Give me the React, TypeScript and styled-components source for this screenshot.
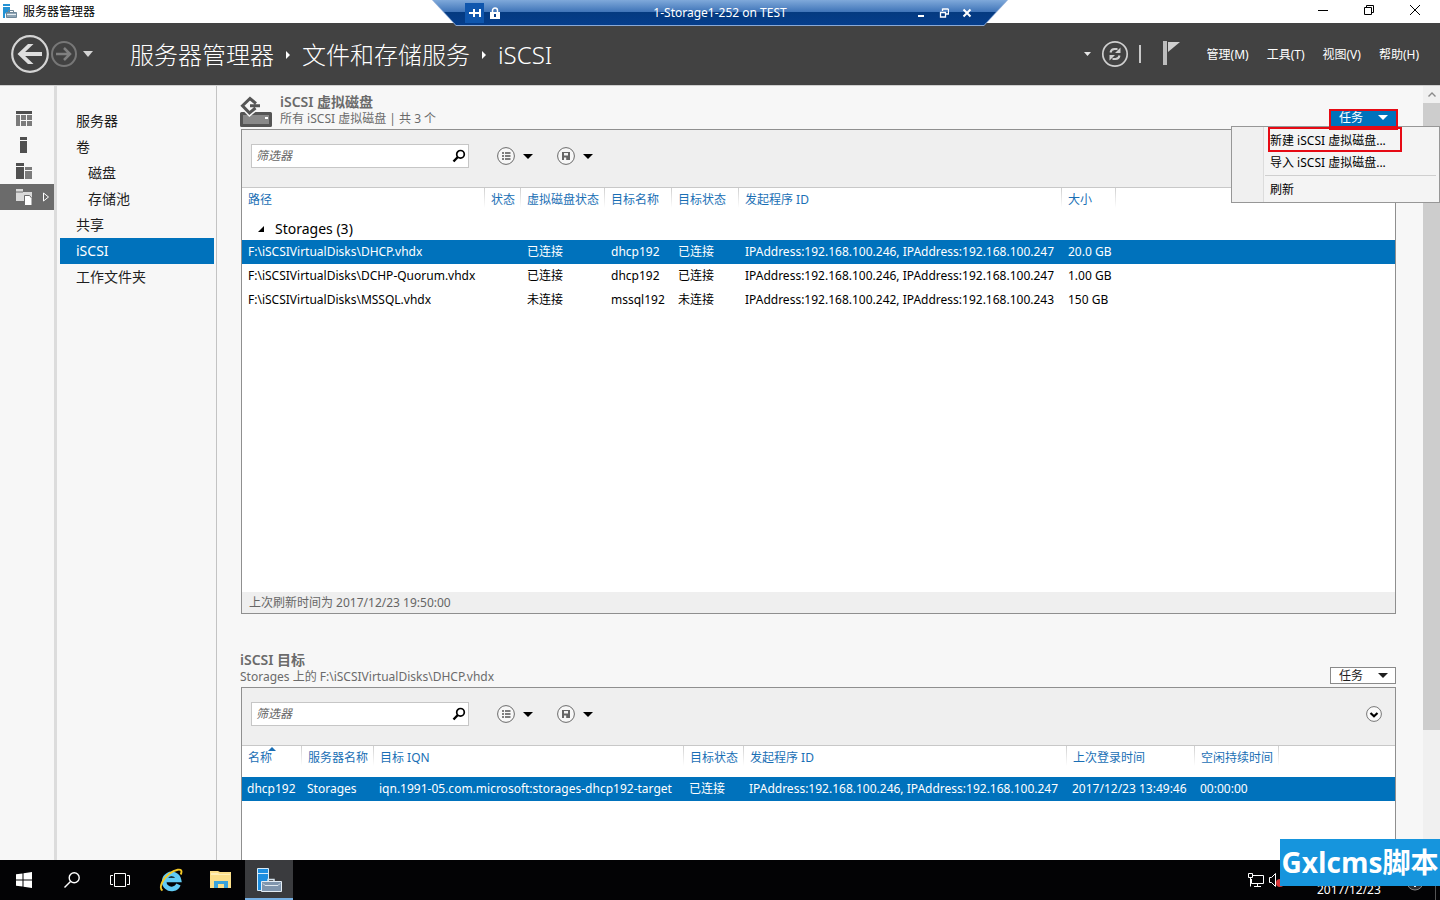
import React from "react";
import styled, { createGlobalStyle, css } from "styled-components";

const blue = "#0072bc";
const link = "#1a6fb5";

const Global = createGlobalStyle`
  * { box-sizing: border-box; }
  body {
    margin: 0;
    overflow: hidden;
    color: #1e1e1e;
    background: #f7f7f7;
    font: 12px/16px "Noto Sans", "Noto Sans CJK SC", sans-serif;
  }
  button, input { font: inherit; color: inherit; }
  button { padding: 0; border: 0; background: none; cursor: pointer; }
  svg { display: block; flex: none; }
  h1, h2, p, ul { margin: 0; padding: 0; font-weight: 400; list-style: none; }
`;

const Screen = styled.div`
  position: relative;
  display: flex;
  flex-direction: column;
  height: 100vh;
`;

/* ---------- window title bar ---------- */
const TitleBar = styled.div`
  display: flex;
  align-items: center;
  flex: none;
  height: 23px;
  padding: 0 19px 0 2px;
  background: #fff;
  color: #000;
`;
const WindowTitle = styled.span`
  flex: 1;
  margin-left: 5px;
`;
const WindowButtons = styled.div`
  display: flex;
  gap: 34px;
  margin-bottom: 3px;
`;

const RemoteBar = styled.div`
  position: absolute;
  top: 0;
  left: 50%;
  z-index: 5;
  width: 576px;
  height: 26px;
  margin-left: -288px;
  clip-path: polygon(0 0, 100% 0, calc(100% - 24px) 100%, 24px 100%);
  background: #8aa9d6;
`;
const RemoteInner = styled.div`
  display: flex;
  align-items: center;
  height: 25px;
  padding: 0 36px 0 33px;
  clip-path: polygon(1px 0, calc(100% - 1px) 0, calc(100% - 24px) 100%, 24px 100%);
  background: linear-gradient(#7fa9da 0, #3f74b8 12px, #043a80 12px, #053d8b 25px);
  color: #fff;
`;
const RemoteName = styled.span`
  flex: 1;
  padding-left: 24px;
  text-align: center;
`;
const PinButton = styled.button`
  display: grid;
  place-items: center;
  width: 19px;
  height: 20px;
  margin-right: 6px;
  background: #0f56ad;
`;
const RemoteButtons = styled.div`
  display: flex;
  gap: 13px;
`;

/* ---------- header with the breadcrumb ---------- */
const Header = styled.header`
  display: flex;
  align-items: center;
  flex: none;
  height: 63px;
  padding: 0 21px 0 10px;
  border-bottom: 1px solid #cfcfcf;
  background: #424242;
  color: #fff;
`;
const HistoryButton = styled.button`
  width: 20px;
  padding-left: 5px;
`;
const Crumbs = styled.nav`
  display: flex;
  align-items: center;
  gap: 11px;
  margin: 1px 0 0 32px;
  font-size: 24px;
  font-weight: 300;
  line-height: 36px;
`;
const Crumb = styled.a`
  color: #fff;
  text-decoration: none;
`;
const HeaderTools = styled.div`
  display: flex;
  align-items: center;
  gap: 10px;
  margin-left: auto;
`;
const HeaderMenu = styled.div`
  display: flex;
  gap: 18px;
  margin: 2px 0 0 16px;
`;
const Bar = styled.span`
  width: 2px;
  height: 18px;
  margin-right: 12px;
  background: #c8c8c8;
`;

/* ---------- body ---------- */
const Body = styled.div`
  display: flex;
  flex: 1;
  min-height: 0;
`;
const Rail = styled.nav`
  width: 57px;
  flex: none;
  padding-top: 20px;
  border-right: 3px solid #dcdcdc;
`;
const RailButton = styled.button<{ $on?: boolean }>`
  display: flex;
  align-items: center;
  gap: 10px;
  width: 100%;
  height: 26px;
  padding-left: 16px;
  background: ${(p) => (p.$on ? "#6b6b6b" : "none")};
`;
const SideNav = styled.nav`
  width: 160px;
  flex: none;
  padding: 22px 2px 0 3px;
  border-right: 1px solid #c3c3c3;
`;
const SideLink = styled.a<{ $on?: boolean; $sub?: boolean }>`
  display: block;
  padding-left: ${(p) => (p.$sub ? 28 : 16)}px;
  font-size: 14px;
  line-height: 26px;
  text-decoration: none;
  color: ${(p) => (p.$on ? "#fff" : "#1e1e1e")};
  background: ${(p) => (p.$on ? blue : "none")};
`;
const Content = styled.main`
  display: flex;
  flex-direction: column;
  flex: 1;
  min-width: 0;
  padding: 8px 27px 0 24px;
`;
const Scrollbar = styled.div`
  width: 17px;
  flex: none;
  background: #f0f0f0;
`;
const ScrollArrow = styled.button`
  display: grid;
  place-items: center;
  width: 100%;
  height: 17px;
`;
const ScrollThumb = styled.div`
  height: 81%;
  background: #cdcdcd;
`;

/* ---------- panels ---------- */
const Section = styled.section<{ $fill?: boolean }>`
  display: flex;
  flex-direction: column;
  flex: ${(p) => (p.$fill ? "1 0 auto" : "none")};
  margin-bottom: ${(p) => (p.$fill ? 0 : 38)}px;
`;
const PanelHead = styled.div`
  position: relative;
  display: flex;
  height: 35px;
  color: #6b6b6b;
`;
const HeadText = styled.div`
  flex: 1;
  margin-left: -1px;
`;
const HeadIcon = styled.span`
  margin: 2px 9px 0 -1px;
`;
const PanelTitle = styled.h2`
  margin-bottom: 2px;
  font-size: 14px;
  font-weight: 600;
  line-height: 15px;
`;
const TaskWrap = styled.div`
  position: relative;
  align-self: flex-end;
  margin-bottom: 3px;
`;
const TaskButton = styled.button<{ $on?: boolean }>`
  display: flex;
  align-items: center;
  justify-content: space-between;
  width: 66px;
  height: 17px;
  padding: 0 7px 0 8px;
  border: 1px solid ${(p) => (p.$on ? blue : "#8a8a8a")};
  background: ${(p) => (p.$on ? blue : "#fff")};
  color: ${(p) => (p.$on ? "#fff" : "#1e1e1e")};
`;
const mark = css`
  position: absolute;
  border: 2px solid #e60a14;
  pointer-events: none;
`;
const ButtonMark = styled.span`
  ${mark}
  z-index: 3;
  inset: 0 -2px -4px -1px;
  border-bottom-width: 4px;
`;
const ItemMark = styled.span`
  ${mark}
  inset: 0 37px auto 36px;
  height: 25px;
`;
const Menu = styled.div`
  position: absolute;
  top: 17px;
  right: -44px;
  z-index: 2;
  width: 209px;
  padding: 3px 3px 1px 0;
  border: 1px solid #979797;
  background: linear-gradient(90deg, #f0f0f0 31px, #dcdcdc 31px, #dcdcdc 32px, #f4f4f4 32px);
`;
const MenuItem = styled.button`
  display: block;
  width: 100%;
  padding-left: 38px;
  line-height: 22px;
  text-align: left;
  color: #000;
`;
const MenuRule = styled.div`
  height: 1px;
  margin: 1px 0 3px 33px;
  background: #cfcfcf;
`;
const Panel = styled.div<{ $fill?: boolean }>`
  display: flex;
  flex-direction: column;
  flex: 1;
  border: 1px solid #8f8f8f;
  border-bottom-width: ${(p) => (p.$fill ? 0 : 1)}px;
  background: #fff;
`;
const Toolbar = styled.div`
  display: flex;
  align-items: center;
  height: 58px;
  padding: 0 13px 5px 9px;
  border-bottom: 1px solid #c8c8c8;
  background: #efefef;
`;
const SearchBox = styled.label`
  display: flex;
  align-items: center;
  width: 218px;
  height: 24px;
  margin-right: 28px;
  padding: 0 2px 0 4px;
  border: 1px solid #c6c6c6;
  background: #fff;
`;
const SearchInput = styled.input`
  flex: 1;
  min-width: 0;
  padding: 0;
  border: 0;
  outline: 0;
  background: none;
  &::placeholder { font-style: italic; color: #666; opacity: 1; }
`;
const DropTool = styled.button`
  display: flex;
  align-items: center;
  gap: 8px;
  width: 60px;
`;
const Expander = styled.button`
  margin-left: auto;
`;
const TableArea = styled.div<{ $tall?: boolean }>`
  flex: 1;
  min-height: ${(p) => (p.$tall ? 404 : 0)}px;
`;
const Table = styled.table<{ $gap?: boolean }>`
  width: 100%;
  border-spacing: 0;
  table-layout: fixed;
  white-space: nowrap;
  color: #000;
  th, td { padding: 0 0 0 6px; text-align: left; font-weight: 400; }
  td { padding-left: ${(p) => (p.$gap ? 5 : 6)}px; }
  th {
    position: relative;
    height: ${(p) => (p.$gap ? 31 : 30)}px;
    padding-bottom: 7px;
    color: ${link};
    background: linear-gradient(#cfcfcf, #fff) no-repeat right top / 1px 20px;
  }
  th:last-child { background: none; }
`;
const SortMark = styled.span`
  position: absolute;
  top: 1px;
  left: 26px;
`;
const Row = styled.tr<{ $on?: boolean }>`
  height: 24px;
  color: ${(p) => (p.$on ? "#fff" : "#000")};
  background: ${(p) => (p.$on ? blue : "none")};
`;
const GroupButton = styled.button`
  display: flex;
  align-items: center;
  gap: 10px;
  padding-left: 9px;
  font-size: 14px;
  line-height: 22px;
`;
const Status = styled.p`
  height: 21px;
  padding-left: 7px;
  background: #efefef;
  color: #666;
  line-height: 21px;
`;

/* ---------- taskbar ---------- */
const Taskbar = styled.footer`
  display: flex;
  flex: none;
  z-index: 4;
  height: 40px;
  background: #030305;
  color: #fff;
`;
const TaskItem = styled.button<{ $on?: boolean; $wide?: boolean }>`
  display: grid;
  place-items: center;
  width: ${(p) => (p.$wide ? 53 : 48)}px;
  background: ${(p) => (p.$on ? "#3a3b3e" : "none")};
  box-shadow: ${(p) => (p.$on ? "inset 0 -2px #76b0e4" : "none")};
`;
const Tray = styled.div`
  display: flex;
  align-items: center;
  gap: 3px;
  margin-left: auto;
  padding-right: 4px;
`;
const Clock = styled.time`
  align-self: flex-end;
  width: 68px;
  margin: 0 16px 0 28px;
  line-height: 20px;
`;
const TrayEnd = styled.span`
  height: 40px;
  margin-left: 6px;
  border-left: 1px solid #555;
`;
const Watermark = styled.div`
  position: absolute;
  right: 0;
  bottom: 14px;
  z-index: 6;
  width: 160px;
  height: 47px;
  background: #1695dd;
  color: #fff;
  font: 700 28px/47px "Open Sans", "Noto Sans CJK SC", sans-serif;
  text-align: center;
  white-space: nowrap;
`;

/* ---------- drawings ---------- */
const Caret = ({ w = 10, h = 5, fill = "#000" }: { w?: number; h?: number; fill?: string }) => (
  <svg width={w} height={h} viewBox="0 0 10 5" preserveAspectRatio="none"><path d="M0 0h10L5 5z" fill={fill} /></svg>
);
const CrumbArrow = () => (
  <svg width="6" height="8" viewBox="0 0 6 8"><path d="M1 0l4 4-4 4z" fill="#fff" /></svg>
);
const ServerLogo = () => (
  <svg width="26" height="26" viewBox="0 0 26 26" fill="none">
    <path d="M1.500 1.500h11v22h-11z" fill="#1d8ee0" stroke="#d8ecfa" />
    <path d="M1 6.500h11" stroke="#d8ecfa" />
    <path d="M12 14v-1.500h6V14" stroke="#d5e2ec" strokeWidth="1.500" />
    <path d="M5.500 14.500h20v10h-20z" fill="#7f95ad" stroke="#e4edf5" />
    <path d="M7 16.500l2 2h13l2-2" stroke="#dfe8ef" />
  </svg>
);
const SmallLogo = () => (
  <svg width="16" height="16" viewBox="0 0 16 16" fill="none">
    <path d="M1 0h7v2H1zM1 3h7v5H5l-2 2v4H1z" fill="#2492d4" />
    <path d="M6.500 8V6.500h5V8" stroke="#6f8799" />
    <path d="M4.500 8.500h10v5h-10z" fill="#8fa5b5" stroke="#6f8799" />
    <path d="M5 10.500h9" stroke="#e6edf2" />
  </svg>
);
const Back = () => (
  <svg width="40" height="40" viewBox="0 0 40 40" fill="none">
    <circle cx="20" cy="20" r="17.800" stroke="#d4d4d4" strokeWidth="2.200" />
    <path d="M32 20H11" stroke="#dedede" strokeWidth="4" />
    <path d="M7.500 20L18 10h5.500L13 20l10.500 10H18z" fill="#dedede" />
  </svg>
);
const Forward = () => (
  <svg width="28" height="28" viewBox="0 0 28 28" fill="none">
    <circle cx="14" cy="14" r="12" stroke="#777" strokeWidth="2" />
    <path d="M6 14h14M14 8l6 6-6 6" stroke="#808080" strokeWidth="2.500" />
  </svg>
);
const Refresh = () => (
  <svg width="28" height="28" viewBox="0 0 28 28" fill="none" stroke="#cfcfcf">
    <circle cx="14" cy="14" r="12.200" strokeWidth="1.700" />
    <path d="M9.500 12.500c.5-2.500 2-3.500 4-3.500h3M18.500 15.500c-.5 2.500-2 3.500-4 3.500h-3" strokeWidth="2" />
    <path d="M19.500 7.500v5.500H14zM8.500 20.500V15H14z" fill="#cfcfcf" stroke="none" />
  </svg>
);
const Flag = () => (
  <svg width="18" height="26" viewBox="0 0 18 26"><path d="M0 0h4v24H0z" fill="#bdbdbd" /><path d="M5 1h12L5 11z" fill="#d0d0d0" /></svg>
);
const Magnifier = () => (
  <svg width="14" height="14" viewBox="0 0 14 14" fill="none" stroke="#000">
    <circle cx="8.500" cy="5.300" r="3.800" strokeWidth="1.700" /><path d="M5.800 8L1.500 12.500" strokeWidth="2.400" />
  </svg>
);
const ListIcon = () => (
  <svg width="18" height="18" viewBox="0 0 18 18" fill="none">
    <circle cx="9" cy="9" r="8.400" stroke="#6a6a6a" fill="#f7f7f7" />
    <path d="M5 6h2M5 9h2M5 12h2M8 6h5.500M8 9h5.500M8 12h5.500" stroke="#555" strokeWidth="1.700" />
  </svg>
);
const SaveIcon = () => (
  <svg width="18" height="18" viewBox="0 0 18 18" fill="none">
    <circle cx="9" cy="9" r="8.400" stroke="#6a6a6a" fill="#f7f7f7" />
    <path d="M5 5h8v8H5z" fill="#666" /><path d="M7 6h4v2.500H7zM7 10.500h2.200V13H7z" fill="#f4f4f4" />
  </svg>
);
const Chevron = () => (
  <svg width="16" height="16" viewBox="0 0 16 16" fill="none">
    <circle cx="8" cy="8" r="7.400" stroke="#777" fill="#fafafa" /><path d="M4.500 7L8 10.300 11.500 7" stroke="#000" strokeWidth="2.200" />
  </svg>
);
const DiskIcon = () => (
  <svg width="32" height="32" viewBox="0 0 32 32" fill="none">
    <path d="M1.500 17.500h29v12h-29z" fill="#898989" stroke="#555" strokeWidth="3" strokeLinejoin="round" />
    <path d="M16 7.500L10 2.500 2.500 9.800 9.500 17l6-5" stroke="#f7f7f7" strokeWidth="6" />
    <path d="M16 7.500L10 2.500 2.500 9.800 9.500 17l6-5M10 9.800h10" stroke="#555" strokeWidth="3" />
    <path d="M25 21h3v2h-3z" fill="#fff" />
  </svg>
);

const caption = { fill: "none", stroke: "#000" };
const railIcons = [
  <svg key="a" width="16" height="16" viewBox="0 0 16 16"><path d="M0 0h16v3H0z" fill="#4e4e4e" /><path d="M0 4h4v11H0zM5 4h5v5H5zM11 4h5v5h-5zM5 10h5v5H5zM11 10h5v5h-5z" fill="#7b7b7b" /></svg>,
  <svg key="b" width="16" height="16" viewBox="0 0 16 16"><path d="M4 0h7v3H4zM4 4h7v12H4z" fill="#505050" /></svg>,
  <svg key="c" width="16" height="16" viewBox="0 0 16 16"><path d="M0 0h8v3H0zM0 4h8v12H0z" fill="#505050" /><path d="M9 4h7v3H9zM9 8h7v8H9z" fill="#7b7b7b" /></svg>,
];

const NavItems = [
  { text: "服务器" },
  { text: "卷" },
  { text: "磁盘", sub: true },
  { text: "存储池", sub: true },
  { text: "共享" },
  { text: "iSCSI", on: true },
  { text: "工作文件夹" },
];

const diskCols = [243, 36, 84, 67, 67, 323, 54];
const diskHeads = ["路径", "状态", "虚拟磁盘状态", "目标名称", "目标状态", "发起程序 ID", "大小"];
const disks = [
  ["F:\\iSCSIVirtualDisks\\DHCP.vhdx", "", "已连接", "dhcp192", "已连接", "IPAddress:192.168.100.246, IPAddress:192.168.100.247", "20.0 GB"],
  ["F:\\iSCSIVirtualDisks\\DCHP-Quorum.vhdx", "", "已连接", "dhcp192", "已连接", "IPAddress:192.168.100.246, IPAddress:192.168.100.247", "1.00 GB"],
  ["F:\\iSCSIVirtualDisks\\MSSQL.vhdx", "", "未连接", "mssql192", "未连接", "IPAddress:192.168.100.242, IPAddress:192.168.100.243", "150 GB"],
];
const targetCols = [60, 72, 310, 60, 323, 128, 84];
const targetHeads = ["名称", "服务器名称", "目标 IQN", "目标状态", "发起程序 ID", "上次登录时间", "空闲持续时间"];
const targets = [
  ["dhcp192", "Storages", "iqn.1991-05.com.microsoft:storages-dhcp192-target", "已连接", "IPAddress:192.168.100.246, IPAddress:192.168.100.247", "2017/12/23 13:49:46", "00:00:00"],
];

function FilterBar() {
  return (
    <Toolbar>
      <SearchBox>
        <SearchInput type="text" placeholder="筛选器" aria-label="筛选器" />
        <Magnifier />
      </SearchBox>
      <DropTool aria-label="列表"><ListIcon /><Caret /></DropTool>
      <DropTool aria-label="保存"><SaveIcon /><Caret /></DropTool>
      <Expander aria-label="展开"><Chevron /></Expander>
    </Toolbar>
  );
}

type GridProps = { cols: number[]; heads: string[]; rows: string[][]; group?: string; sorted?: boolean };

function DataGrid({ cols, heads, rows, group, sorted }: GridProps) {
  return (
    <Table $gap={sorted}>
      <colgroup>
        {cols.map((w, i) => <col key={i} width={w} />)}
        <col />
      </colgroup>
      <thead>
        <tr>
          {heads.map((h, i) => (
            <th key={h} scope="col">
              {h}
              {sorted && i === 0 && <SortMark><svg width="8" height="4" viewBox="0 0 8 4"><path d="M0 4l4-4 4 4z" fill={link} /></svg></SortMark>}
            </th>
          ))}
          <th />
        </tr>
      </thead>
      <tbody>
        {group && (
          <tr>
            <td colSpan={cols.length + 1}>
              <GroupButton>
                <svg width="8" height="8" viewBox="0 0 8 8"><path d="M7 1v6H1z" fill="#000" /></svg>
                {group}
              </GroupButton>
            </td>
          </tr>
        )}
        {rows.map((r, i) => (
          <Row key={i} $on={i === 0}>
            {r.map((c, j) => <td key={j}>{c}</td>)}
            <td />
          </Row>
        ))}
      </tbody>
    </Table>
  );
}

export default function App() {
  return (
    <Screen>
      <Global />
      <TitleBar>
        <SmallLogo />
        <WindowTitle>服务器管理器</WindowTitle>
        <WindowButtons>
          <button aria-label="最小化"><svg width="12" height="12" viewBox="0 0 12 12" {...caption}><path d="M1 6.500h10" /></svg></button>
          <button aria-label="还原"><svg width="12" height="12" viewBox="0 0 12 12" {...caption}><path d="M1.500 3.500h7v7h-7zM3.500 3.500v-2h7v7h-2" /></svg></button>
          <button aria-label="关闭"><svg width="12" height="12" viewBox="0 0 12 12" {...caption}><path d="M1 1l10 10M11 1L1 11" /></svg></button>
        </WindowButtons>
      </TitleBar>

      <RemoteBar>
        <RemoteInner>
          <PinButton aria-label="固定">
            <svg width="12" height="10" viewBox="0 0 12 10" fill="none" stroke="#fff" strokeWidth="2"><path d="M0 5h5M5 1v8M5 5h6M11 1v8" /></svg>
          </PinButton>
          <svg width="10" height="12" viewBox="0 0 10 12"><path d="M2.500 5V3.500a2.500 2.500 0 015 0V5" fill="none" stroke="#fff" strokeWidth="1.500" /><path d="M0 5h10v7H0z" fill="#fff" /><path d="M4 7h2v3H4z" fill="#0a3f8c" /></svg>
          <RemoteName>1-Storage1-252 on TEST</RemoteName>
          <RemoteButtons>
            <button aria-label="最小化连接栏"><svg width="10" height="10" viewBox="0 0 10 10"><path d="M2 7h6v2H2z" fill="#fff" /></svg></button>
            <button aria-label="还原连接栏"><svg width="10" height="10" viewBox="0 0 10 10" fill="none" stroke="#fff"><path d="M1 4.500h6M3.500 1h6M1.500 4v5h5V4M3.500 3V.5M9.500 1v5H7" strokeWidth="1.300" /></svg></button>
            <button aria-label="断开连接"><svg width="10" height="10" viewBox="0 0 10 10" stroke="#fff" strokeWidth="2"><path d="M1.500 1.500l7 7M8.500 1.500l-7 7" /></svg></button>
          </RemoteButtons>
        </RemoteInner>
      </RemoteBar>

      <Header>
        <button aria-label="后退"><Back /></button>
        <button aria-label="前进"><Forward /></button>
        <HistoryButton aria-label="历史记录"><Caret w={10} h={6} fill="#d4d4d4" /></HistoryButton>
        <Crumbs>
          <Crumb href="#">服务器管理器</Crumb>
          <CrumbArrow />
          <Crumb href="#storage">文件和存储服务</Crumb>
          <CrumbArrow />
          <Crumb href="#iscsi">iSCSI</Crumb>
        </Crumbs>
        <HeaderTools>
          <Caret w={7} h={4} fill="#e6e6e6" />
          <button aria-label="刷新"><Refresh /></button>
          <Bar />
          <button aria-label="通知"><Flag /></button>
          <HeaderMenu>
            <button>管理(M)</button>
            <button>工具(T)</button>
            <button>视图(V)</button>
            <button>帮助(H)</button>
          </HeaderMenu>
        </HeaderTools>
      </Header>

      <Body>
        <Rail>
          {railIcons.map((icon, i) => (
            <RailButton key={i} aria-label={["仪表板", "本地服务器", "所有服务器"][i]}>{icon}</RailButton>
          ))}
          <RailButton $on aria-label="文件和存储服务">
            <svg width="16" height="17" viewBox="0 0 16 17"><path d="M0 2V0h7v3h9v9H0z" fill="#d9d9d9" /><path d="M0 3h7" stroke="#6b6b6b" /><path d="M8.500 6.500h5l2.500 3V16.500H8.500z" fill="#fff" stroke="#6b6b6b" /></svg>
            <svg width="8" height="10" viewBox="0 0 8 10"><path d="M1.500 1l5 4-5 4z" fill="none" stroke="#fff" /></svg>
          </RailButton>
        </Rail>

        <SideNav>
          {NavItems.map((n) => (
            <SideLink key={n.text} href="#" $on={n.on} $sub={n.sub}>{n.text}</SideLink>
          ))}
        </SideNav>

        <Content>
          <Section>
            <PanelHead>
              <HeadIcon><DiskIcon /></HeadIcon>
              <HeadText>
                <PanelTitle>iSCSI 虚拟磁盘</PanelTitle>
                <p>所有 iSCSI 虚拟磁盘 | 共 3 个</p>
              </HeadText>
              <TaskWrap>
                <TaskButton $on aria-haspopup="menu">任务<Caret fill="#fff" /></TaskButton>
                <ButtonMark />
                <Menu role="menu">
                  <MenuItem role="menuitem">新建 iSCSI 虚拟磁盘...</MenuItem>
                  <MenuItem role="menuitem">导入 iSCSI 虚拟磁盘...</MenuItem>
                  <MenuRule />
                  <MenuItem role="menuitem">刷新</MenuItem>
                  <ItemMark />
                </Menu>
              </TaskWrap>
            </PanelHead>
            <Panel>
              <FilterBar />
              <TableArea $tall>
                <DataGrid cols={diskCols} heads={diskHeads} rows={disks} group="Storages (3)" />
              </TableArea>
              <Status>上次刷新时间为 2017/12/23 19:50:00</Status>
            </Panel>
          </Section>

          <Section $fill>
            <PanelHead>
              <HeadText>
                <PanelTitle>iSCSI 目标</PanelTitle>
                <p>Storages 上的 F:\iSCSIVirtualDisks\DHCP.vhdx</p>
              </HeadText>
              <TaskWrap>
                <TaskButton aria-haspopup="menu">任务<Caret fill="#1e1e1e" /></TaskButton>
              </TaskWrap>
            </PanelHead>
            <Panel $fill>
              <FilterBar />
              <TableArea>
                <DataGrid cols={targetCols} heads={targetHeads} rows={targets} sorted />
              </TableArea>
            </Panel>
          </Section>
        </Content>

        <Scrollbar>
          <ScrollArrow aria-label="向上滚动">
            <svg width="8" height="5" viewBox="0 0 8 5" fill="none"><path d="M.5 4.500L4 1l3.500 3.500" stroke="#8a8a8a" strokeWidth="1.400" /></svg>
          </ScrollArrow>
          <ScrollThumb />
        </Scrollbar>
      </Body>

      <Taskbar>
        <TaskItem aria-label="开始">
          <svg width="16" height="16" viewBox="0 0 16 16" fill="#fff"><path d="M0 2.300l6.500-.9v6.100H0zM7.500 1.200L16 0v7.500H7.500zM0 8.500h6.500v6.100L0 13.700zM7.500 8.500H16V16l-8.500-1.200z" /></svg>
        </TaskItem>
        <TaskItem aria-label="搜索">
          <svg width="16" height="16" viewBox="0 0 16 16" fill="none" stroke="#fff" strokeWidth="1.400"><circle cx="10.200" cy="5.800" r="5" /><path d="M6.500 9.500L.5 15.500" /></svg>
        </TaskItem>
        <TaskItem aria-label="任务视图">
          <svg width="20" height="16" viewBox="0 0 20 16" fill="none" stroke="#fff"><path d="M4.500 1.500h11v13h-11zM3 3.500H.5v9H3M17 3.500h2.500v9H17" /></svg>
        </TaskItem>
        <TaskItem $wide aria-label="Internet Explorer">
          <svg width="24" height="24" viewBox="0 0 24 24" fill="none">
            <path d="M19.500 16.500a7.500 7.500 0 11.500-4.500H7.500" stroke="#62ccf5" strokeWidth="4.600" />
            <path d="M3.500 22.500C-.5 20 3.500 11 10 6S22.500.5 22.500 3.500c0 1-.3 2-.8 3" stroke="#f5c927" strokeWidth="1.900" />
          </svg>
        </TaskItem>
        <TaskItem aria-label="文件资源管理器">
          <svg width="22" height="20" viewBox="0 0 22 20"><path d="M0 1h8l2 1h11v16H0z" fill="#fbdf8a" /><path d="M1 3h7l1 1h11v1H1z" fill="#fff0b8" /><path d="M4 18v-7h14v7h-4v-4H8v4z" fill="#39a3dc" /></svg>
        </TaskItem>
        <TaskItem $on aria-label="服务器管理器"><ServerLogo /></TaskItem>
        <Tray>
          <svg width="18" height="14" viewBox="0 0 18 14" fill="none" stroke="#fff"><path d="M6 2.500h10.500v8H4.500V6M7 13.500h7M10.500 11v2M1.500.5h4v4h-4zM3.500 4.500v9" /></svg>
          <svg width="18" height="14" viewBox="0 0 18 14" fill="none" stroke="#fff"><path d="M1.500 4.500h2l4-4v13l-4-4h-2z" /><circle cx="12" cy="10" r="4" fill="#d8383a" stroke="none" /></svg>
          <Clock>2017/12/23</Clock>
          <svg width="22" height="22" viewBox="0 0 22 22"><path d="M0 11h22" stroke="#777" /><circle cx="11" cy="13" r="8" fill="#2d2d2f" stroke="#888" /><path d="M10 9h2v9h-2zM7 10h8v2H7z" fill="#eee" /></svg>
          <TrayEnd />
        </Tray>
      </Taskbar>

      <Watermark>Gxlcms脚本</Watermark>
    </Screen>
  );
}
